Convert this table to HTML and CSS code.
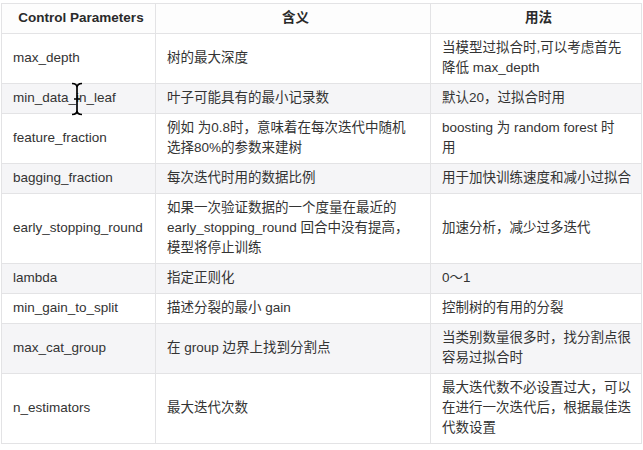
FILE: index.html
```html
<!DOCTYPE html>
<html lang="zh">
<head>
<meta charset="utf-8">
<link rel="stylesheet" href="styles.css">
</head>
<body>
<div class="wrap">
<table class="params">
  <colgroup>
    <col class="c1"><col class="c2"><col class="c3">
  </colgroup>
  <thead>
    <tr><th>Control Parameters</th><th>含义</th><th>用法</th></tr>
  </thead>
  <tbody>
    <tr><td>max_depth</td><td>树的最大深度</td><td>当模型过拟合时,可以考虑首先<br>降低 max_depth</td></tr>
    <tr><td>min_data_in_leaf</td><td>叶子可能具有的最小记录数</td><td>默认20，过拟合时用</td></tr>
    <tr><td>feature_fraction</td><td>例如 为0.8时，意味着在每次迭代中随机<br>选择80%的参数来建树</td><td>boosting 为 random forest 时<br>用</td></tr>
    <tr><td>bagging_fraction</td><td>每次迭代时用的数据比例</td><td>用于加快训练速度和减小过拟合</td></tr>
    <tr><td>early_stopping_round</td><td>如果一次验证数据的一个度量在最近的<br>early_stopping_round 回合中没有提高，<br>模型将停止训练</td><td>加速分析，减少过多迭代</td></tr>
    <tr><td>lambda</td><td>指定正则化</td><td>0～1</td></tr>
    <tr><td>min_gain_to_split</td><td>描述分裂的最小 gain</td><td>控制树的有用的分裂</td></tr>
    <tr><td>max_cat_group</td><td>在 group 边界上找到分割点</td><td>当类别数量很多时，找分割点很<br>容易过拟合时</td></tr>
    <tr><td>n_estimators</td><td>最大迭代次数</td><td>最大迭代数不必设置过大，可以<br>在进行一次迭代后，根据最佳迭<br>代数设置</td></tr>
  </tbody>
</table>
<svg class="ibeam" width="12" height="34" viewBox="0 0 12 34">
  <path d="M1 1.5 C4 1.5 6 3 6 5.5 C6 3 8 1.5 11 1.5 M6 5.5 V28.5 M1 32.5 C4 32.5 6 31 6 28.5 C6 31 8 32.5 11 32.5 M3 17 H9" fill="none" stroke="#000" stroke-width="1.7"/>
</svg>
</div>
</body>
</html>
```

FILE: styles.css
```css
html, body {
  margin: 0;
  padding: 0;
  background: #ffffff;
}
.wrap {
  position: relative;
  padding: 3px 0 0 1px;
}
.params {
  border-collapse: collapse;
  table-layout: fixed;
  width: 640px;
  font-family: "Liberation Sans", "Noto Sans CJK SC", sans-serif;
  font-size: 13.5px;
  line-height: 20px;
  color: #333333;
}
.c1 { width: 154px; }
.c2 { width: 275px; }
.c3 { width: 211px; }
.params th,
.params td {
  border: 1px solid #e3e3e5;
  padding: 4px 6px 5px 11px;
  vertical-align: middle;
  text-align: left;
  white-space: nowrap;
}
.params th {
  font-weight: bold;
  text-align: center;
  color: #2a2a2a;
  background: #fdfdfd;
}
.params tbody tr:nth-child(even) td {
  background: #f5f5f7;
}
.params tbody tr:nth-child(odd) td {
  background: #ffffff;
}
.ibeam {
  position: absolute;
  left: 71px;
  top: 82px;
}
```
